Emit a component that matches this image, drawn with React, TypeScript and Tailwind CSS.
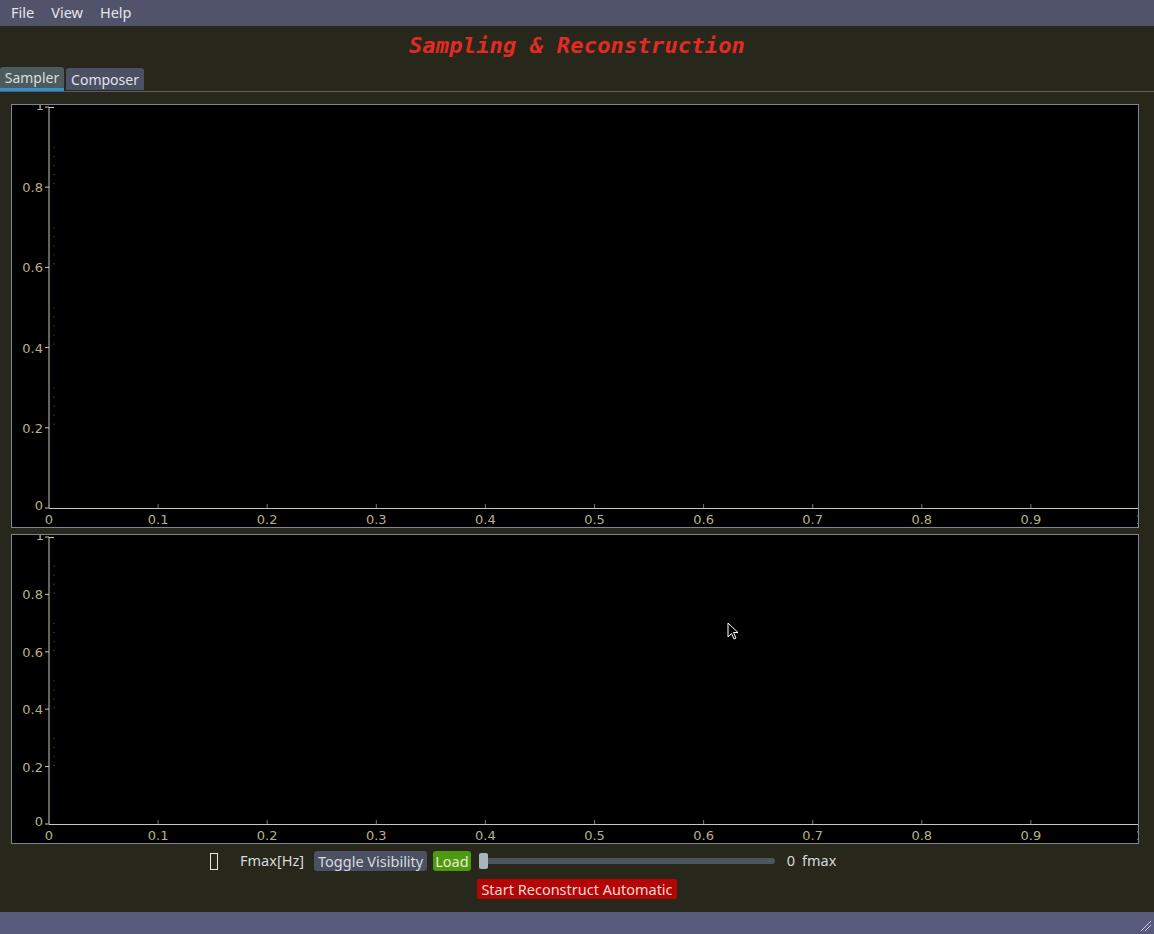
import React from "react";

const FONT = { fontFamily: '"Noto Sans", "DejaVu Sans", sans-serif' };

interface PlotProps {
  height: number;
  axisBottom: number;
}

// simple pyqtgraph-like empty plot with axes and tick labels
function EmptyPlot({ height, axisBottom }: PlotProps) {
  const left = 37;
  const top = 2;
  const right = 1128;
  const xStep = (right - left) / 10;
  const yStep = (axisBottom - top) / 5;
  const xs = Array.from({ length: 11 }, (_, i) => i);
  const ys = Array.from({ length: 6 }, (_, i) => i);
  return (
    <div className="border border-[#7d8494] bg-black" style={{ height }}>
      <svg width="1126" height={height - 2} className="block">
        {/* y axis */}
        <line x1={left} y1={top} x2={left} y2={axisBottom} stroke="#c9c6b4" strokeWidth="1" />
        <line x1={left} y1={top + 0.5} x2={left + 5} y2={top + 0.5} stroke="#c9c6b4" strokeWidth="1" />
        {/* x axis */}
        <line x1={left} y1={axisBottom + 0.5} x2={right} y2={axisBottom + 0.5} stroke="#c9c6b4" strokeWidth="1" />
        {ys.map((i) => {
          const y = axisBottom - i * yStep;
          return (
            <g key={"y" + i}>
              <line x1={left - 4} y1={y} x2={left} y2={y} stroke="#c9c6b4" />
              <text
                x={i === 5 ? left - 5 : left - 6}
                y={i === 0 ? y + 2 : i === 5 ? y + 3 : y + 5}
                textAnchor="end"
                fill="#b7b08a"
                fontSize="13"
                fontFamily='"DejaVu Sans", sans-serif'
              >
                {i === 0 ? "0" : i === 5 ? "1" : (i * 0.2).toFixed(1)}
              </text>
              {i > 0 && i < 5 && (
                <line x1={left + 5} y1={y - yStep / 2} x2={left + 5} y2={y + 2} stroke="#56606a" strokeDasharray="1 8" />
              )}
            </g>
          );
        })}
        {xs.map((i) => {
          const x = left + i * xStep;
          return (
            <g key={"x" + i}>
              <line x1={x} y1={axisBottom} x2={x} y2={axisBottom - 4} stroke="#7a7a6a" />
              <text
                x={x}
                y={axisBottom + 16}
                textAnchor="middle"
                fill="#b7b08a"
                fontSize="13"
                fontFamily='"DejaVu Sans", sans-serif'
              >
                {i === 0 ? "0" : i === 10 ? "1" : (i / 10).toFixed(1)}
              </text>
            </g>
          );
        })}
      </svg>
    </div>
  );
}

export default function App() {
  return (
    <div className="relative w-[1154px] h-[934px] bg-[#27281b] text-[#dfe1e2] flex flex-col overflow-hidden" style={FONT}>
      {/* menu bar */}
      <div className="h-[26px] bg-[#50536a] flex items-center gap-[17px] px-[11px] text-[14.5px] text-[#e6e6ea]">
        <span>File</span>
        <span>View</span>
        <span>Help</span>
      </div>

      {/* title */}
      <div className="h-[38px] flex items-center justify-center">
        <span
          className="text-[22px] italic font-bold text-[#e42a22] tracking-[0.2px]"
          style={{ fontFamily: '"DejaVu Sans Mono", "Liberation Mono", monospace' }}
        >
          Sampling &amp; Reconstruction
        </span>
      </div>

      {/* tabs */}
      <div className="flex items-end h-[27px] gap-[2px] pl-0">
        <div className="h-[24px] w-[64px] bg-[#4c5c5c] border-b-[3px] border-[#2e8fd8] rounded-t-[3px] flex items-center justify-center text-[14px] text-[#d8dcde]">
          Sampler
        </div>
        <div className="h-[22px] w-[78px] bg-[#4b5064] rounded-t-[3px] flex items-center justify-center text-[14px] text-[#e0e2e6] mb-[1px]">
          Composer
        </div>
      </div>
      <div className="h-px bg-[#5a6066]" />

      {/* plots */}
      <div className="flex flex-col pl-[11px] pr-[15px] pt-[12px] gap-[6px]">
        <EmptyPlot height={424} axisBottom={403} />
        <EmptyPlot height={310} axisBottom={289} />
      </div>

      {/* controls */}
      <div className="flex flex-col mt-[7px] gap-[8px] text-[14.5px]">
        <div className="flex items-center h-[20px] pl-[210px]">
          <div className="w-[8px] h-[17px] border-[1.5px] border-[#e8e8e8] mr-[22px]" />
          <span className="text-[#d8dade] mr-[10px]">Fmax[Hz]</span>
          <button className="h-[20px] px-[4px] bg-[#4b5063] rounded-[3px] text-[#d8dade] mr-[6px]">Toggle Visibility</button>
          <button className="h-[20px] px-[2px] bg-[#4e9a0e] rounded-[3px] text-[#e6ecd8] mr-[8px]">Load</button>
          <div className="flex items-center w-[296px]">
            <div className="w-[9px] h-[16px] bg-[#a8b4c0] rounded-[2px]" />
            <div className="flex-1 h-[6px] bg-[#4d5560] rounded-r-[3px]" />
          </div>
          <span className="ml-[12px] text-[#d8dade]">0</span>
          <span className="ml-[7px] text-[#d8dade]">fmax</span>
        </div>
        <div className="flex justify-center">
          <button className="h-[20px] px-[4px] bg-[#b40404] rounded-[2px] text-[#f0d8d8]">Start Reconstruct Automatic</button>
        </div>
      </div>

      <div className="flex-1" />

      {/* status bar */}
      <div className="relative h-[22px] bg-[#575a7a]">
        <svg className="absolute right-[2px] bottom-[2px]" width="12" height="12">
          <line x1="1" y1="11" x2="11" y2="1" stroke="#c8c8d8" />
          <line x1="5" y1="11" x2="11" y2="5" stroke="#c8c8d8" />
        </svg>
      </div>

      {/* mouse cursor */}
      <svg className="absolute left-[727px] top-[622px]" width="12" height="20">
        <path d="M1 1 L1 15 L4.5 11.5 L7 17 L9 16 L6.5 10.5 L11 10.5 Z" fill="#000" stroke="#fff" strokeWidth="1" />
      </svg>
    </div>
  );
}
